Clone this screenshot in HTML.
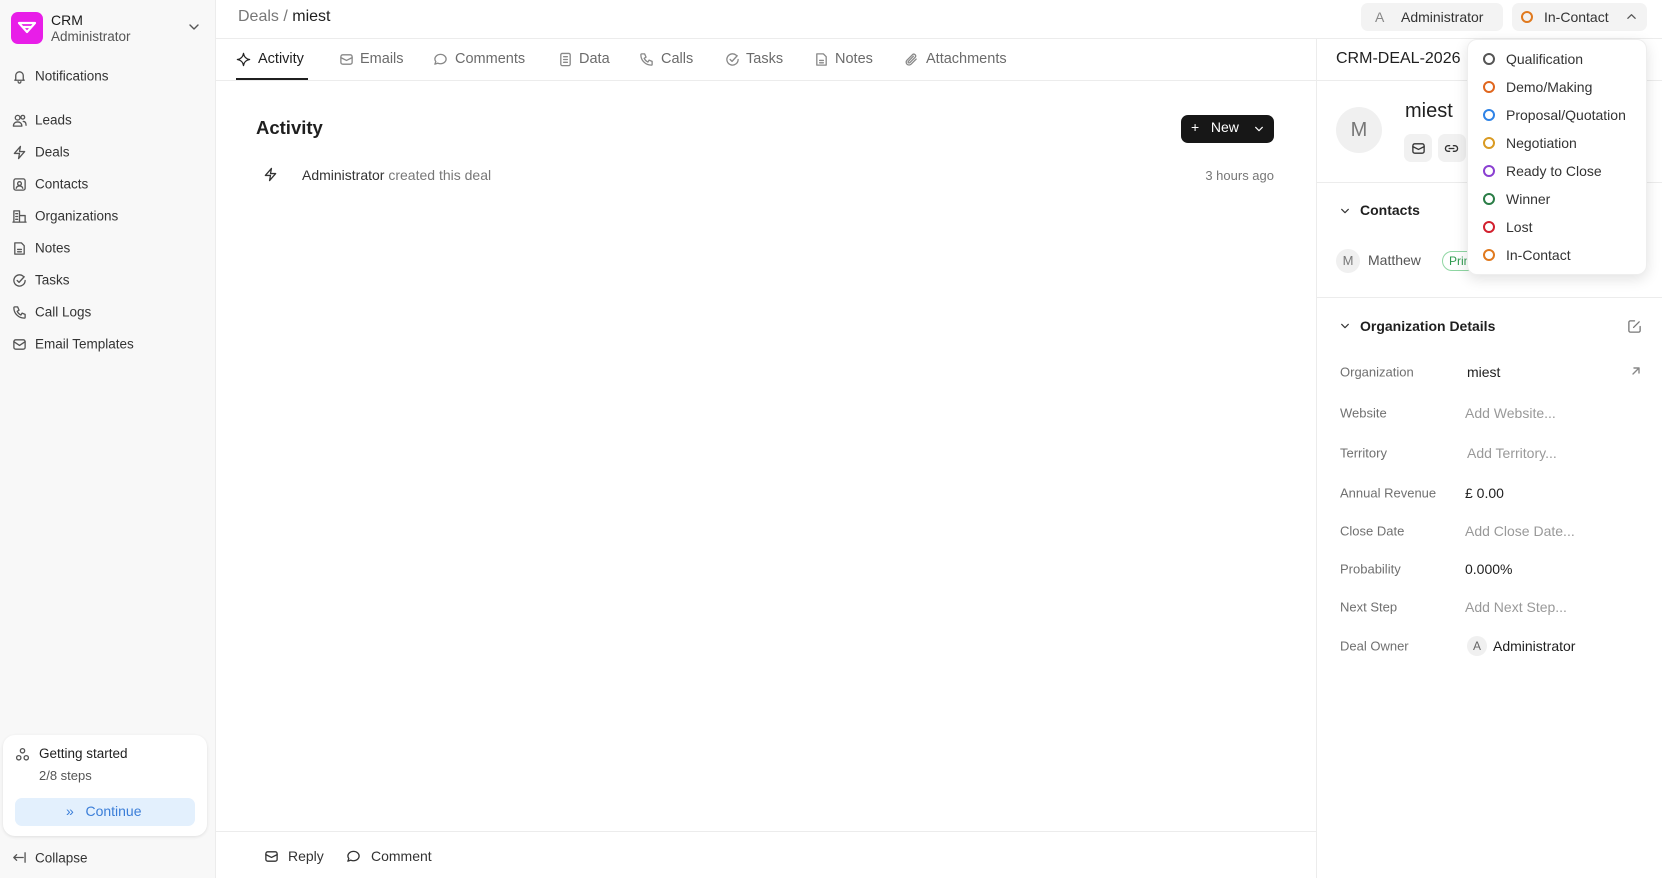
<!DOCTYPE html>
<html><head><meta charset="utf-8"><style>
*{box-sizing:border-box;margin:0;padding:0}
body{width:1662px;height:878px;overflow:hidden;font-family:"Liberation Sans",sans-serif;color:#1f1f1f;background:#fff;position:relative;font-size:14px}
.a{position:absolute;white-space:nowrap}
.sb{position:absolute;left:0;top:0;width:216px;height:878px;background:#f8f8f8;border-right:1px solid #ececec}
.ic{position:absolute;width:15px;height:15px;fill:none;stroke:#555;stroke-width:1.4;stroke-linecap:round;stroke-linejoin:round}
.nav{position:absolute;left:35px;font-size:13.5px;color:#333;transform:translateY(-50%)}
.tab{position:absolute;top:59px;transform:translateY(-50%);font-size:14.5px;color:#6b6b6b}
.lbl{position:absolute;left:1340px;font-size:13px;color:#707070;transform:translateY(-50%)}
.val{position:absolute;left:1465px;font-size:14px;color:#1f1f1f;transform:translateY(-50%)}
.ph{color:#999}
.dd{position:absolute;left:1506px;font-size:14px;color:#333;transform:translateY(-50%)}
.dot{position:absolute;left:1483px;width:12px;height:12px;border-radius:50%;border:2.5px solid;transform:translateY(-50%)}
</style></head><body>
<div class="sb"></div>
<div class="a" style="left:11px;top:12px;width:32px;height:32px;border-radius:7px;background:#e81ee8"></div>
<svg class="a" style="left:17px;top:20px" width="20" height="16" viewBox="0 0 20 16"><path d="M2 3h16l-8 9z M6 7h8" fill="none" stroke="#fff" stroke-width="2.2" stroke-linejoin="round"/></svg>
<div class="a" style="left:51px;top:12px;font-size:14px;color:#1a1a1a">CRM</div>
<div class="a" style="left:51px;top:29px;font-size:13.5px;color:#555">Administrator</div>
<svg class="ic" style="left:188px;top:21px;width:12px;height:12px" viewBox="0 0 12 12"><path d="M2 4l4 4 4-4"/></svg>

<svg class="ic" style="left:12px;top:69px" viewBox="0 0 16 16"><path d="M4 11V7a4 4 0 018 0v4l1 1H3zM6.5 13.5a1.5 1.5 0 003 0"/></svg>
<div class="nav" style="top:76px">Notifications</div>
<svg class="ic" style="left:12px;top:113px" viewBox="0 0 16 16"><circle cx="6" cy="5" r="2.5"/><path d="M1.5 14c0-3 2-4.5 4.5-4.5S10.5 11 10.5 14z"/><circle cx="11.5" cy="4.5" r="2"/><path d="M12 9c2 0 3 1.5 3 4"/></svg>
<div class="nav" style="top:120px">Leads</div>
<svg class="ic" style="left:12px;top:145px" viewBox="0 0 16 16"><path d="M9 1.5L2.5 9H8l-1 5.5L13.5 7H8z"/></svg>
<div class="nav" style="top:152px">Deals</div>
<svg class="ic" style="left:12px;top:177px" viewBox="0 0 16 16"><rect x="2" y="2" width="12" height="12" rx="2"/><circle cx="8" cy="7" r="2"/><path d="M4.5 12c.5-2 2-2.5 3.5-2.5s3 .5 3.5 2.5"/></svg>
<div class="nav" style="top:184px">Contacts</div>
<svg class="ic" style="left:12px;top:209px" viewBox="0 0 16 16"><path d="M2 14V2h6v12M8 7h6v7M1 14h14M4 5h2M4 8h2M4 11h2"/></svg>
<div class="nav" style="top:216px">Organizations</div>
<svg class="ic" style="left:12px;top:241px" viewBox="0 0 16 16"><path d="M3 2h7l3 3v9H3zM6 9h4M6 11.5h4"/></svg>
<div class="nav" style="top:248px">Notes</div>
<svg class="ic" style="left:12px;top:273px" viewBox="0 0 16 16"><path d="M14 8a6 6 0 11-2-4.5M5.5 8l2 2L13 4"/></svg>
<div class="nav" style="top:280px">Tasks</div>
<svg class="ic" style="left:12px;top:305px" viewBox="0 0 16 16"><path d="M3 2h3l1.5 3.5-2 1.2a8 8 0 004 4l1.2-2L14 10v3a1 1 0 01-1 1C7 14 2 9 2 3a1 1 0 011-1z"/></svg>
<div class="nav" style="top:312px">Call Logs</div>
<svg class="ic" style="left:12px;top:337px" viewBox="0 0 16 16"><rect x="2" y="3" width="12" height="10" rx="2"/><path d="M2 5l6 4 6-4"/></svg>
<div class="nav" style="top:344px">Email Templates</div>

<div class="a" style="left:3px;top:735px;width:204px;height:101px;background:#fff;border-radius:12px;box-shadow:0 1px 3px rgba(0,0,0,.1)"></div>
<svg class="ic" style="left:15px;top:747px" viewBox="0 0 16 16"><circle cx="8" cy="4" r="2.3"/><circle cx="4" cy="11.5" r="2.3"/><circle cx="12" cy="11.5" r="2.3"/></svg>
<div class="a" style="left:39px;top:746px;font-size:13.5px;color:#1f1f1f">Getting started</div>
<div class="a" style="left:39px;top:768px;font-size:13px;color:#555">2/8 steps</div>
<div class="a" style="left:15px;top:798px;width:180px;height:28px;border-radius:7px;background:#e3f0fd"></div>
<div class="a" style="left:66px;top:803px;font-size:14px;color:#3b7ed8">»&nbsp;&nbsp; Continue</div>
<svg class="ic" style="left:11px;top:850px" viewBox="0 0 16 16"><path d="M13 8H3M6 5L3 8l3 3M15 3v10"/></svg>
<div class="nav" style="top:858px">Collapse</div>

<div class="a" style="left:216px;top:38px;width:1446px;height:1px;background:#ececec"></div>
<div class="a" style="left:238px;top:8px;font-size:16px;color:#777">Deals / <span style="color:#1f1f1f">miest</span></div>
<div class="a" style="left:1361px;top:3px;width:142px;height:28px;border-radius:7px;background:#f3f3f3"></div>
<div class="a" style="left:1375px;top:9px;font-size:14px;color:#888">A</div>
<div class="a" style="left:1401px;top:9px;font-size:14px;color:#333">Administrator</div>
<div class="a" style="left:1512px;top:3px;width:135px;height:28px;border-radius:7px;background:#f3f3f3"></div>
<div class="a" style="left:1521px;top:11px;width:12px;height:12px;border-radius:50%;border:2.5px solid #e0791e"></div>
<div class="a" style="left:1544px;top:9px;font-size:14px;color:#333">In-Contact</div>
<svg class="ic" style="left:1626px;top:11px;width:11px;height:11px" viewBox="0 0 12 12"><path d="M2 8l4-4 4 4"/></svg>

<div class="a" style="left:216px;top:80px;width:1100px;height:1px;background:#ececec"></div>
<div class="a" style="left:236px;top:78px;width:72px;height:2px;background:#1f1f1f"></div>
<svg class="ic" style="left:236px;top:52px" viewBox="0 0 16 16"><path d="M8 1.5c.5 3.5 3 6 6.5 6.5-3.5.5-6 3-6.5 6.5-.5-3.5-3-6-6.5-6.5C5 7.5 7.5 5 8 1.5z" stroke="#222"/></svg>
<div class="tab" style="left:258px;color:#1f1f1f">Activity</div>
<svg class="ic" style="left:339px;top:52px;stroke:#888" viewBox="0 0 16 16"><rect x="2" y="3" width="12" height="10" rx="2"/><path d="M2 6l6 3 6-3"/></svg>
<div class="tab" style="left:360px">Emails</div>
<svg class="ic" style="left:433px;top:52px;stroke:#888" viewBox="0 0 16 16"><path d="M8 2.5c3.3 0 6 2.2 6 5s-2.7 5-6 5c-1 0-2-.2-2.8-.6L2 13l1-2.7C2.4 9.5 2 8.5 2 7.5c0-2.8 2.7-5 6-5z"/></svg>
<div class="tab" style="left:455px">Comments</div>
<svg class="ic" style="left:558px;top:52px;stroke:#888" viewBox="0 0 16 16"><rect x="3" y="1.5" width="10" height="13" rx="1.5"/><path d="M6 5h4M6 8h4M6 11h4"/></svg>
<div class="tab" style="left:579px">Data</div>
<svg class="ic" style="left:639px;top:52px;stroke:#888" viewBox="0 0 16 16"><path d="M3 2h3l1.5 3.5-2 1.2a8 8 0 004 4l1.2-2L14 10v3a1 1 0 01-1 1C7 14 2 9 2 3a1 1 0 011-1z"/></svg>
<div class="tab" style="left:661px">Calls</div>
<svg class="ic" style="left:725px;top:52px;stroke:#888" viewBox="0 0 16 16"><path d="M14 8a6 6 0 11-2-4.5M5.5 8l2 2L13 4"/></svg>
<div class="tab" style="left:746px">Tasks</div>
<svg class="ic" style="left:814px;top:52px;stroke:#888" viewBox="0 0 16 16"><path d="M3 2h7l3 3v9H3zM6 9h4M6 11.5h4"/></svg>
<div class="tab" style="left:835px">Notes</div>
<svg class="ic" style="left:904px;top:52px;stroke:#888" viewBox="0 0 16 16"><path d="M13 7.5l-5.5 5.5a3 3 0 01-4.3-4.3l6-6a2 2 0 012.8 2.8l-6 6a1 1 0 01-1.4-1.4L10 4.5"/></svg>
<div class="tab" style="left:926px">Attachments</div>

<div class="a" style="left:256px;top:117px;font-size:18.5px;font-weight:bold;color:#1f1f1f">Activity</div>
<div class="a" style="left:1181px;top:115px;width:93px;height:28px;border-radius:7px;background:#171717"></div>
<div class="a" style="left:1191px;top:119px;font-size:14px;color:#fff">+&nbsp;&nbsp; New</div>
<svg class="ic" style="left:1254px;top:124px;width:10px;height:10px;stroke:#fff" viewBox="0 0 12 12"><path d="M2 4l4 4 4-4"/></svg>
<svg class="ic" style="left:263px;top:167px;stroke:#333" viewBox="0 0 16 16"><path d="M9 1.5L2.5 9H8l-1 5.5L13.5 7H8z"/></svg>
<div class="a" style="left:302px;top:167px;font-size:14px;color:#333">Administrator <span style="color:#777">created this deal</span></div>
<div class="a" style="left:1160px;top:168px;width:114px;text-align:right;font-size:13px;color:#777">3 hours ago</div>

<div class="a" style="left:216px;top:831px;width:1100px;height:1px;background:#ececec"></div>
<svg class="ic" style="left:264px;top:849px;stroke:#333" viewBox="0 0 16 16"><rect x="2" y="3" width="12" height="10" rx="2"/><path d="M2 6l6 3 6-3"/></svg>
<div class="a" style="left:288px;top:848px;font-size:14px;color:#333">Reply</div>
<svg class="ic" style="left:346px;top:849px;stroke:#333" viewBox="0 0 16 16"><path d="M8 2.5c3.3 0 6 2.2 6 5s-2.7 5-6 5c-1 0-2-.2-2.8-.6L2 13l1-2.7C2.4 9.5 2 8.5 2 7.5c0-2.8 2.7-5 6-5z"/></svg>
<div class="a" style="left:371px;top:848px;font-size:14px;color:#333">Comment</div>

<div class="a" style="left:1316px;top:38px;width:1px;height:840px;background:#ececec"></div>
<div class="a" style="left:1336px;top:50px;font-size:16px;color:#1f1f1f">CRM-DEAL-2026</div>
<div class="a" style="left:1316px;top:80px;width:346px;height:1px;background:#ececec"></div>
<div class="a" style="left:1336px;top:107px;width:46px;height:46px;border-radius:50%;background:#f0f0f0;text-align:center;line-height:46px;font-size:20px;color:#777">M</div>
<div class="a" style="left:1405px;top:100px;font-size:20px;color:#1f1f1f">miest</div>
<div class="a" style="left:1404px;top:134px;width:28px;height:28px;border-radius:7px;background:#f1f1f1"></div>
<svg class="ic" style="left:1411px;top:141px;stroke:#333" viewBox="0 0 16 16"><rect x="2" y="3" width="12" height="10" rx="2"/><path d="M2 6l6 3 6-3"/></svg>
<div class="a" style="left:1438px;top:134px;width:28px;height:28px;border-radius:7px;background:#f1f1f1"></div>
<svg class="ic" style="left:1444px;top:141px;stroke:#333" viewBox="0 0 16 16"><path d="M6 5H4.5a3 3 0 000 6H6M10 5h1.5a3 3 0 010 6H10M5.5 8h5"/></svg>
<div class="a" style="left:1316px;top:182px;width:346px;height:1px;background:#ececec"></div>
<svg class="ic" style="left:1340px;top:206px;width:10px;height:10px;stroke:#333" viewBox="0 0 12 12"><path d="M2 4l4 4 4-4"/></svg>
<div class="a" style="left:1360px;top:202px;font-size:14px;font-weight:bold;color:#1f1f1f">Contacts</div>
<div class="a" style="left:1336px;top:249px;width:24px;height:24px;border-radius:50%;background:#f0f0f0;text-align:center;line-height:24px;font-size:13px;color:#777">M</div>
<div class="a" style="left:1368px;top:252px;font-size:14px;color:#555">Matthew</div>
<div class="a" style="left:1442px;top:251px;width:60px;height:20px;border-radius:10px;border:1px solid #8fd6a3;font-size:12px;color:#2f9a4f;padding-left:6px;line-height:18px">Primary</div>
<div class="a" style="left:1316px;top:297px;width:346px;height:1px;background:#ececec"></div>
<svg class="ic" style="left:1340px;top:321px;width:10px;height:10px;stroke:#333" viewBox="0 0 12 12"><path d="M2 4l4 4 4-4"/></svg>
<div class="a" style="left:1360px;top:318px;font-size:14px;font-weight:bold;color:#1f1f1f">Organization Details</div>
<svg class="ic" style="left:1627px;top:319px;stroke:#777" viewBox="0 0 16 16"><path d="M8 2H3.5A1.5 1.5 0 002 3.5v9A1.5 1.5 0 003.5 14h9a1.5 1.5 0 001.5-1.5V8M7 9l6-6"/></svg>
<div class="lbl" style="top:372px">Organization</div><div class="val" style="top:372px;left:1467px">miest</div>
<svg class="ic" style="left:1630px;top:365px;width:12px;height:12px;stroke:#888" viewBox="0 0 12 12"><path d="M3 9l6-6M4 3h5v5"/></svg>
<div class="lbl" style="top:413px">Website</div><div class="val ph" style="top:413px">Add Website...</div>
<div class="lbl" style="top:453px">Territory</div><div class="val ph" style="top:453px;left:1467px">Add Territory...</div>
<div class="lbl" style="top:493px">Annual Revenue</div><div class="val" style="top:493px">£ 0.00</div>
<div class="lbl" style="top:531px">Close Date</div><div class="val ph" style="top:531px">Add Close Date...</div>
<div class="lbl" style="top:569px">Probability</div><div class="val" style="top:569px">0.000%</div>
<div class="lbl" style="top:607px">Next Step</div><div class="val ph" style="top:607px">Add Next Step...</div>
<div class="lbl" style="top:646px">Deal Owner</div>
<div class="a" style="left:1467px;top:636px;width:20px;height:20px;border-radius:50%;background:#f0f0f0;text-align:center;line-height:20px;font-size:12px;color:#666">A</div>
<div class="val" style="top:646px;left:1493px">Administrator</div>

<div class="a" style="left:1467px;top:39px;width:180px;height:236px;background:#fff;border-radius:10px;border:1px solid #eee;box-shadow:0 4px 14px rgba(0,0,0,.12)"></div>
<div class="dot" style="top:59px;border-color:#555"></div><div class="dd" style="top:59px">Qualification</div>
<div class="dot" style="top:87px;border-color:#e0661e"></div><div class="dd" style="top:87px">Demo/Making</div>
<div class="dot" style="top:115px;border-color:#2f83e6"></div><div class="dd" style="top:115px">Proposal/Quotation</div>
<div class="dot" style="top:143px;border-color:#d99a22"></div><div class="dd" style="top:143px">Negotiation</div>
<div class="dot" style="top:171px;border-color:#8a3fd1"></div><div class="dd" style="top:171px">Ready to Close</div>
<div class="dot" style="top:199px;border-color:#2a7d46"></div><div class="dd" style="top:199px">Winner</div>
<div class="dot" style="top:227px;border-color:#d2202e"></div><div class="dd" style="top:227px">Lost</div>
<div class="dot" style="top:255px;border-color:#e0791e"></div><div class="dd" style="top:255px">In-Contact</div>
</body></html>
